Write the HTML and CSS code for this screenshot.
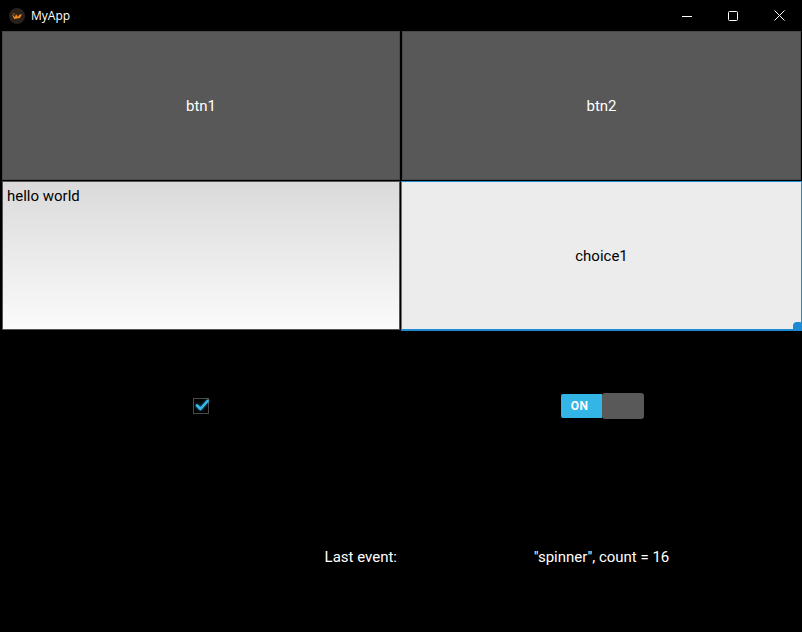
FILE: index.html
```html
<!DOCTYPE html>
<html>
<head>
<meta charset="utf-8">
<link rel="stylesheet" href="styles.css">
</head>
<body>
<div class="window">
  <div class="titlebar">
    <div class="title-left">
      <svg class="app-icon" width="16" height="16" viewBox="0 0 16 16">
        <circle cx="8" cy="8" r="8" fill="#2a211c"/>
        <path d="M3 6 L6 9 L7 6 L9 9 L10 7 L13 6 L11 10 L5 11 Z" fill="#f08a1c"/>
        <path d="M4 5 L6 7 L5 5 Z" fill="#f5a030"/>
      </svg>
      <span class="title-text">MyApp</span>
    </div>
    <div class="controls">
      <div class="ctl">
        <svg width="10" height="10" viewBox="0 0 10 10"><path d="M0 5.5 H10" stroke="#fff" stroke-width="1"/></svg>
      </div>
      <div class="ctl">
        <svg width="10" height="10" viewBox="0 0 10 10"><rect x="0.5" y="0.5" width="9" height="9" rx="1" fill="none" stroke="#fff" stroke-width="1"/></svg>
      </div>
      <div class="ctl">
        <svg width="11" height="11" viewBox="0 0 11 11"><path d="M0.5 0.5 L10.5 10.5 M10.5 0.5 L0.5 10.5" stroke="#fff" stroke-width="1"/></svg>
      </div>
    </div>
  </div>
  <div class="grid">
    <div class="cell"><div class="btn btn-left">btn1</div></div>
    <div class="cell"><div class="btn btn-right">btn2</div></div>
    <div class="cell"><div class="textinput">hello world</div></div>
    <div class="cell"><div class="spinner">choice1<span class="corner"></span></div></div>
    <div class="cell center">
      <div class="checkbox">
        <svg width="14" height="12" viewBox="0 0 14 12" class="check">
          <path d="M2 6.5 L5.5 10 L12.5 2" fill="none" stroke="#38b6ea" stroke-width="2.6" stroke-linecap="round" stroke-linejoin="round"/>
        </svg>
      </div>
    </div>
    <div class="cell center">
      <div class="switch">
        <div class="sw-on">ON</div>
        <div class="sw-off"></div>
      </div>
    </div>
    <div class="cell label-right"><span>Last event:</span></div>
    <div class="cell center"><span class="label">"spinner", count = 16</span></div>
  </div>
</div>
</body>
</html>
```

FILE: styles.css
```css
html, body {
  margin: 0;
  padding: 0;
  background: #000;
}
body {
  width: 802px;
  height: 632px;
  overflow: hidden;
  font-family: Roboto, "Liberation Sans", sans-serif;
}
.window {
  width: 802px;
  height: 632px;
  display: flex;
  flex-direction: column;
  background: #000;
}
.titlebar {
  height: 31px;
  flex: none;
  display: flex;
  align-items: center;
  justify-content: space-between;
  background: #000;
}
.title-left {
  display: flex;
  align-items: center;
  padding-left: 9px;
  gap: 6px;
}
.app-icon {
  display: block;
}
.title-text {
  color: #fff;
  font-family: "Open Sans", "Noto Sans", sans-serif;
  font-size: 12px;
}
.controls {
  display: flex;
  height: 31px;
}
.ctl {
  width: 46px;
  height: 31px;
  display: flex;
  align-items: center;
  justify-content: center;
}
.ctl svg { display: block; }
.grid {
  flex: 1;
  display: grid;
  grid-template-columns: 401px 401px;
  grid-template-rows: 150px 150px 150px 1fr;
}
.cell {
  display: flex;
  min-width: 0;
  min-height: 0;
  color: #fff;
  font-size: 15px;
}
.btn {
  flex: 1;
  display: flex;
  align-items: center;
  justify-content: center;
  background: #585858;
  border: 1px solid #4a4a4a;
  color: #fff;
  margin: 0 1px 1px 2px;
}
.btn-right {
  margin: 0 1px 1px 1px;
}
.textinput {
  flex: 1;
  margin: 0 1px 1px 2px;
  border: 1px solid #555;
  background: linear-gradient(#dadada, #fbfbfb);
  color: #000;
  padding: 6px 4px;
  font-size: 15px;
  line-height: 17px;
}
.spinner {
  flex: 1;
  position: relative;
  border: 1px solid #1d8ad2;
  border-bottom-width: 2px;
  background: #ececec;
  color: #000;
  display: flex;
  align-items: center;
  justify-content: center;
  font-size: 15px;
}
.corner {
  position: absolute;
  right: -1px;
  bottom: -2px;
  width: 9px;
  height: 9px;
  background: #1d8ad2;
  border-top-left-radius: 4px;
  border-top-right-radius: 2px;
}
.center {
  align-items: center;
  justify-content: center;
}
.checkbox {
  width: 14px;
  height: 14px;
  border: 1px solid #4a4a4a;
  position: relative;
  margin-left: 1px;
}
.check {
  position: absolute;
  left: 1px;
  top: 0;
  filter: drop-shadow(0 0 1.5px rgba(56, 182, 234, 0.7));
}
.switch {
  display: flex;
  align-items: center;
  margin-left: 2px;
}
.sw-on {
  width: 41px;
  height: 24px;
  background: #33b5e5;
  border-radius: 2px 0 0 2px;
  color: #fff;
  font-weight: bold;
  font-size: 12px;
  letter-spacing: 0.5px;
  display: flex;
  align-items: center;
  justify-content: center;
  padding-right: 4px;
  box-sizing: border-box;
}
.sw-off {
  width: 42px;
  height: 26px;
  background: #595959;
  border-radius: 3px;
}
.label-right {
  align-items: center;
  justify-content: flex-end;
  padding-right: 4px;
}
.label {
  color: #fff;
}
```
